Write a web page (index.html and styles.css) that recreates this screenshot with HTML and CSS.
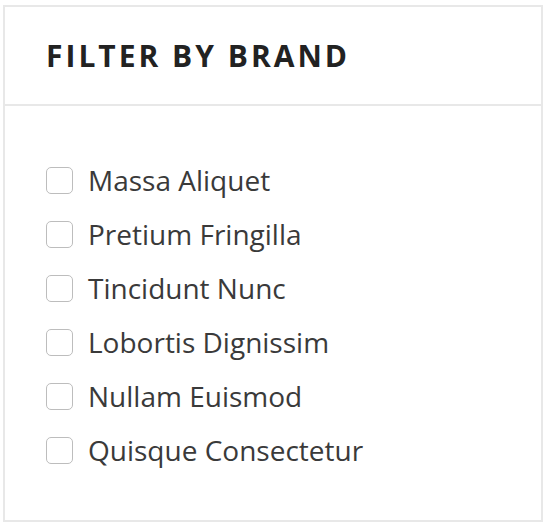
FILE: index.html
```html
<!DOCTYPE html>
<html>
<head>
<meta charset="utf-8">
<link rel="stylesheet" href="styles.css">
</head>
<body>
<div class="widget">
  <div class="widget-head">
    <h2 class="widget-title">FILTER BY BRAND</h2>
  </div>
  <ul class="brand-list">
    <li class="brand"><span class="box"></span><span class="label">Massa Aliquet</span></li>
    <li class="brand"><span class="box"></span><span class="label">Pretium Fringilla</span></li>
    <li class="brand"><span class="box"></span><span class="label">Tincidunt Nunc</span></li>
    <li class="brand"><span class="box"></span><span class="label">Lobortis Dignissim</span></li>
    <li class="brand"><span class="box"></span><span class="label">Nullam Euismod</span></li>
    <li class="brand"><span class="box"></span><span class="label">Quisque Consectetur</span></li>
  </ul>
</div>
</body>
</html>
```
FILE: styles.css
```css
html, body { margin: 0; padding: 0; background: #fff; }
body { padding: 5px 0 0 3px; font-family: "Open Sans", sans-serif; }
.widget {
  border: 2px solid #e8e8e8;
  width: 540px;
  height: 517px;
  box-sizing: border-box;
}
.widget-head {
  height: 99px;
  border-bottom: 2px solid #e8e8e8;
  display: flex;
  align-items: center;
  padding-left: 41px;
  box-sizing: border-box;
}
.widget-title {
  margin: 0;
  font-size: 30px;
  font-weight: 700;
  letter-spacing: 3px;
  color: #222;
  line-height: 1;
}
.brand-list {
  list-style: none;
  margin: 0;
  padding: 47px 0 0 41px;
}
.brand {
  display: flex;
  align-items: center;
  height: 54px;
}
.box {
  width: 27px;
  height: 27px;
  border: 1px solid #bdbdbd;
  border-radius: 5px;
  box-sizing: border-box;
  margin-right: 15px;
  flex: none;
}
.label {
  font-size: 28px;
  color: #3a3a3a;
}
```
